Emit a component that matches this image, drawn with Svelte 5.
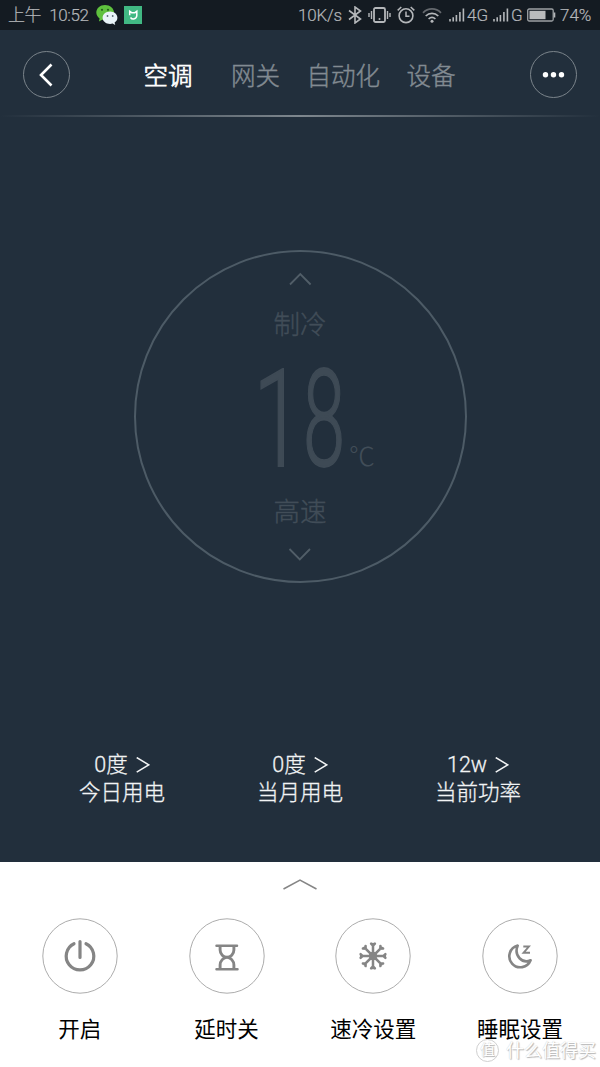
<script>
  const tabs = ['空调', '网关', '自动化', '设备'];
  let active = $state('空调');

  const stats = [
    { value: '0度', label: '今日用电' },
    { value: '0度', label: '当月用电' },
    { value: '12w', label: '当前功率' }
  ];

  const actions = [
    { icon: 'power', label: '开启' },
    { icon: 'timer', label: '延时关' },
    { icon: 'snow', label: '速冷设置' },
    { icon: 'sleep', label: '睡眠设置' }
  ];

  const arms = [0, 45, 90, 135, 180, 225, 270, 315];
</script>

{#snippet signal()}
  <svg class="signal" width="16" height="14" viewBox="0 0 16 14">
    <path d="M1 11v2.5M4.2 9.3v4.2M7.4 7v6.5M10.9 4v9.5M14.4 .5v13" stroke="#b4b7ba" stroke-width="1.6" />
  </svg>
{/snippet}

<div class="screen">
  <div class="statusbar">
    <span class="time"><span>上午</span><span>10:52</span></span>
    <svg class="wechat" width="22" height="21" viewBox="0 0 22 21">
      <path d="M9 0C4 0 .3 3.4.3 7.6c0 2.5 1.3 4.500 3.300 5.900L2.900 16.500l3.300-1.700c1 .3 1.900.4 2.800.4 5 0 9-3.400 9-7.600S14 0 9 0z" fill="#5fc13e" />
      <circle cx="6" cy="4.800" r="1.100" fill="#26601d" />
      <circle cx="12" cy="4.800" r="1.100" fill="#26601d" />
      <path d="M14.100 6.500c-4.200 0-7.500 2.800-7.500 6.200s3.300 6.200 7.500 6.200c.9 0 1.700-.1 2.500-.4l2.600 1.500-.6-2.500c1.800-1.200 2.800-2.900 2.800-4.800 0-3.400-3.200-6.200-7.300-6.200z" fill="#e9f3f8" />
      <circle cx="11.500" cy="11" r=".9" fill="#5d6d75" />
      <circle cx="16.700" cy="11" r=".9" fill="#5d6d75" />
    </svg>
    <svg class="mihome" width="18" height="18" viewBox="0 0 18 18">
      <rect width="18" height="18" fill="#41b883" />
      <path d="M5.700 9.300V5.300L7.600 6.700h3.300l1.900-1.400v4.200a3.500 3.700 0 0 1-6.300 2" fill="none" stroke="#fff" stroke-width="1.500" />
    </svg>

    <span class="speed">10K/s</span>
    <svg class="bt" width="14" height="18" viewBox="0 0 14 18">
      <path d="M1 4.500l11.500 8.500L7 17V1l5.500 4L1 13.500" fill="none" stroke="#b4b7ba" stroke-width="1.600" />
    </svg>
    <svg class="vibrate" width="23" height="16" viewBox="0 0 23 16">
      <rect x="6" y="1" width="11" height="14" rx="1.500" fill="none" stroke="#b4b7ba" stroke-width="1.800" />
      <path d="M3.500 4v8M1 6v4M19.500 4v8M22 6v4" stroke="#b4b7ba" stroke-width="1.400" />
      <circle cx="11.500" cy="12" r="1" fill="#b4b7ba" />
    </svg>
    <svg class="alarm" width="18" height="18" viewBox="0 0 18 18">
      <circle cx="9" cy="9.700" r="6.900" fill="none" stroke="#b4b7ba" stroke-width="1.600" />
      <path d="M9 5.500v4.700h3.500M.7 4.400L4.300 1M17.300 4.400L13.700 1" fill="none" stroke="#b4b7ba" stroke-width="1.500" />
    </svg>
    <svg class="wifi" width="20" height="15" viewBox="0 0 20 15">
      <path d="M1 4.800C6-.4 14-.4 19 4.800" fill="none" stroke="#65696e" stroke-width="1.700" />
      <path d="M3.700 8C7.300 4.400 12.700 4.400 16.300 8M6.600 11c2-1.900 4.800-1.900 6.800 0" fill="none" stroke="#b4b7ba" stroke-width="1.700" />
      <circle cx="10" cy="13.300" r="1.500" fill="#b4b7ba" />
    </svg>
    {@render signal()}
    <span class="net">4G</span>
    {@render signal()}
    <span class="net g">G</span>
    <svg class="battery" width="29" height="14" viewBox="0 0 29 14">
      <rect x=".7" y="1" width="25.500" height="12" rx="1.500" fill="none" stroke="#9da1a4" stroke-width="1.300" />
      <rect x="2.500" y="2.800" width="16" height="8.400" fill="#b9bbbd" />
      <path d="M27.500 4.500v5" stroke="#b4b7ba" stroke-width="1.600" />
    </svg>
    <span class="percent">74%</span>
  </div>

  <header>
    <button class="round" aria-label="返回">
      <svg width="45" height="45" viewBox="0 0 45 45">
        <path d="M27.500 12.500L17 23l10.500 10.500" fill="none" stroke="#fff" stroke-width="2.600" />
      </svg>
    </button>
    <nav>
      {#each tabs as tab}
        <button class="tab" class:active={tab === active} onclick={() => (active = tab)}>{tab}</button>
      {/each}
    </nav>
    <button class="round" aria-label="更多">
      <svg width="45" height="45" viewBox="0 0 45 45" fill="#fff">
        <circle cx="14.500" cy="22.800" r="2.700" />
        <circle cx="22.500" cy="22.800" r="2.700" />
        <circle cx="30.500" cy="22.800" r="2.700" />
      </svg>
    </button>
  </header>
  <div class="line"></div>

  <main>
    <div class="dial">
      <svg class="arrow" width="24" height="14" viewBox="0 0 24 14">
        <path d="M2 12.500L12.300 2l10.300 10.500" fill="none" stroke="#515e68" stroke-width="1.800" />
      </svg>
      <div class="mode">制冷</div>
      <!-- condensed digits: each glyph is squeezed around its own centre -->
      <svg class="temp" width="160" height="110" viewBox="0 0 160 110">
        <text class="digit" transform="translate(58 104) scale(.66 1)">1</text>
        <text class="digit" transform="translate(104 104) scale(.56 1)">8</text>
        <text class="unit" x="129" y="104">℃</text>
      </svg>
      <div class="mode speedmode">高速</div>
      <svg class="arrow down" width="24" height="14" viewBox="0 0 24 14">
        <path d="M1.500 1L11.800 11.500 22 1" fill="none" stroke="#515e68" stroke-width="1.800" />
      </svg>
    </div>

    <div class="stats">
      {#each stats as s}
        <div class="stat">
          <div class="value">
            <span>{s.value}</span>
            <svg width="14" height="17" viewBox="0 0 14 17">
              <path d="M.7 .5l12 7.300-12 7.400" fill="none" stroke="#f2f4f5" stroke-width="1.500" />
            </svg>
          </div>
          <div>{s.label}</div>
        </div>
      {/each}
    </div>
  </main>

  <footer>
    <svg class="pull" width="36" height="12" viewBox="0 0 36 12">
      <path d="M1.500 11L18 2l16.500 9" fill="none" stroke="#858585" stroke-width="1.500" />
    </svg>
    <div class="actions">
      {#each actions as a}
        <div class="action">
          <svg width="76" height="76" viewBox="-38 -38 76 76" fill="none" stroke="#858585">
            <circle r="37.200" stroke="#a3a3a3" stroke-width=".9" />
            {#if a.icon === 'power'}
              <path d="M-6-12.300A13.800 13.800 0 1 0 6-12.300M0-14.500V1.500" stroke-width="3.200" stroke-linecap="round" />
            {:else if a.icon === 'timer'}
              <path d="M-10.500-10.200h20.500M-10.500 13.200h21" stroke-width="2.500" stroke-linecap="round" />
              <path d="M-6.900-10v4C-6.900-2-3.500 1.300 0 1.300S6.900-2 6.900-6V-10M-6.900 13V9C-6.900 5-3.500 1.300 0 1.300S6.900 5 6.900 9V13" stroke-width="2.900" />
            {:else if a.icon === 'snow'}
              {#each arms as deg}
                <path transform="rotate({deg})" d="M0 0v-12M-1.900-12.400L0-10.400 1.900-12.400" stroke-width="2.500" stroke-linecap="round" />
              {/each}
              <circle r="4.200" fill="#858585" stroke="none" />
            {:else}
              <path d="M-2.300-10.400A11 11 0 1 0 10.600 4.300C2.500 8-6.500 0-2.300-10.400z" stroke-width="2.600" stroke-linejoin="round" />
              <path d="M3.300-9.500H8.900L3.500-3.200h6.500" stroke-width="1.900" />
            {/if}
          </svg>
          <div class="label">{a.label}</div>
        </div>
      {/each}
    </div>
  </footer>

  <div class="watermark">
    <span class="seal">值</span>
    <span>什么值得买</span>
  </div>
</div>

<style>
  :global(body) {
    background: #fff;
  }

  .screen {
    position: relative;
    width: 600px;
    height: 1067px;
    display: flex;
    flex-direction: column;
    overflow: hidden;
    background: #222f3c;
    font-family: Roboto, "Noto Sans CJK SC", sans-serif;
    font-weight: 300;
  }

  svg {
    display: block;
    flex: none;
  }

  button {
    border: 0;
    padding: 0;
    background: none;
    font: inherit;
    color: inherit;
  }

  .statusbar {
    height: 30px;
    flex: none;
    display: flex;
    align-items: center;
    background: #141b22;
    color: #b4b7ba;
    font-size: 17px;
    line-height: 32px;
    padding: 0 9px 0 8px;
    white-space: nowrap;
    -webkit-text-stroke: .2px #b4b7ba;
  }

  .time {
    display: flex;
    gap: 8px;
    width: 88px;
    letter-spacing: -.4px;
  }

  .mihome {
    margin-left: 6px;
  }

  .speed {
    margin-left: auto;
    letter-spacing: -.2px;
  }

  .bt {
    margin-left: 6px;
  }

  .vibrate {
    margin-left: 6px;
  }

  .alarm {
    margin-left: 6px;
  }

  .wifi {
    margin: 0 7px 0 7px;
  }

  .net {
    width: 21px;
    margin: 0 5px 0 2px;
  }

  .g {
    width: 12px;
    margin-right: 4px;
  }

  .percent {
    width: 31px;
    margin-left: 4px;
  }

  header {
    height: 85px;
    flex: none;
    display: flex;
    align-items: center;
    justify-content: space-between;
    box-sizing: border-box;
    padding: 4px 23px 0;
  }

  .round {
    width: 47px;
    height: 47px;
    box-sizing: border-box;
    border: 1px solid #7b848b;
    border-radius: 50%;
    display: flex;
    align-items: center;
    justify-content: center;
  }

  nav {
    display: flex;
    gap: 26.500px;
    width: 313px;
    padding-top: 5px;
  }

  .tab {
    font-size: 24.500px;
    line-height: 36px;
    color: #828b92;
    white-space: nowrap;
    -webkit-text-stroke: .4px currentColor;
  }

  .tab:first-child {
    margin-right: 12px;
  }

  .tab.active {
    color: #fff;
    -webkit-text-stroke-width: .7px;
  }

  .line {
    height: 2px;
    flex: none;
    background: linear-gradient(to right, transparent, #7e878e 50%, transparent);
  }

  main {
    height: 745px;
    flex: none;
    display: flex;
    flex-direction: column;
    align-items: center;
  }

  .dial {
    margin-top: 133px;
    width: 333px;
    height: 333px;
    box-sizing: border-box;
    border: 2px solid #4d5b66;
    border-radius: 50%;
    display: flex;
    flex-direction: column;
    align-items: center;
  }

  .arrow {
    margin-top: 20px;
  }

  .mode {
    margin-top: 19px;
    font-size: 26.500px;
    line-height: 40px;
    color: #414d58;
    -webkit-text-stroke: .4px #414d58;
  }

  .temp {
    margin-top: 17px;
    overflow: visible;
  }

  .digit {
    font-size: 135px;
    font-weight: 300;
    text-anchor: middle;
    fill: #3e4a55;
    stroke: #3e4a55;
    stroke-width: 1.800px;
  }

  .unit {
    font-family: "Noto Sans CJK SC", sans-serif;
    font-size: 26px;
    font-weight: 300;
    fill: #414d58;
  }

  .speedmode {
    margin-top: 20px;
  }

  .down {
    margin-top: 16px;
  }

  .stats {
    margin-top: 168px;
    display: flex;
    width: 534px;
  }

  .stat {
    flex: 1;
    text-align: center;
    color: #f2f4f5;
    font-size: 21.500px;
    line-height: 28px;
    -webkit-text-stroke: .3px #f2f4f5;
  }

  .value {
    display: flex;
    justify-content: center;
    align-items: center;
    gap: 8px;
  }

  footer {
    flex: 1;
    background: #fff;
    display: flex;
    flex-direction: column;
    align-items: center;
  }

  .pull {
    margin-top: 16px;
  }

  .actions {
    margin-top: 28px;
    display: flex;
    width: 587px;
  }

  .action {
    flex: 1;
    display: flex;
    flex-direction: column;
    align-items: center;
  }

  .label {
    margin-top: 19px;
    font-size: 21.500px;
    line-height: 34px;
    font-weight: 400;
    color: #000;
  }

  .watermark {
    position: absolute;
    right: 4px;
    bottom: 5px;
    display: flex;
    align-items: center;
    gap: 7px;
    font-size: 18px;
    line-height: 22px;
    font-weight: 400;
    color: #fff;
    text-shadow: 1px 1px 1px #b4b4b4, 0 0 1px #c4c4c4;
  }

  .seal {
    width: 21px;
    height: 21px;
    border: 1px solid #d0d0d0;
    border-radius: 50%;
    font-size: 15px;
    line-height: 20px;
    text-align: center;
  }
</style>
